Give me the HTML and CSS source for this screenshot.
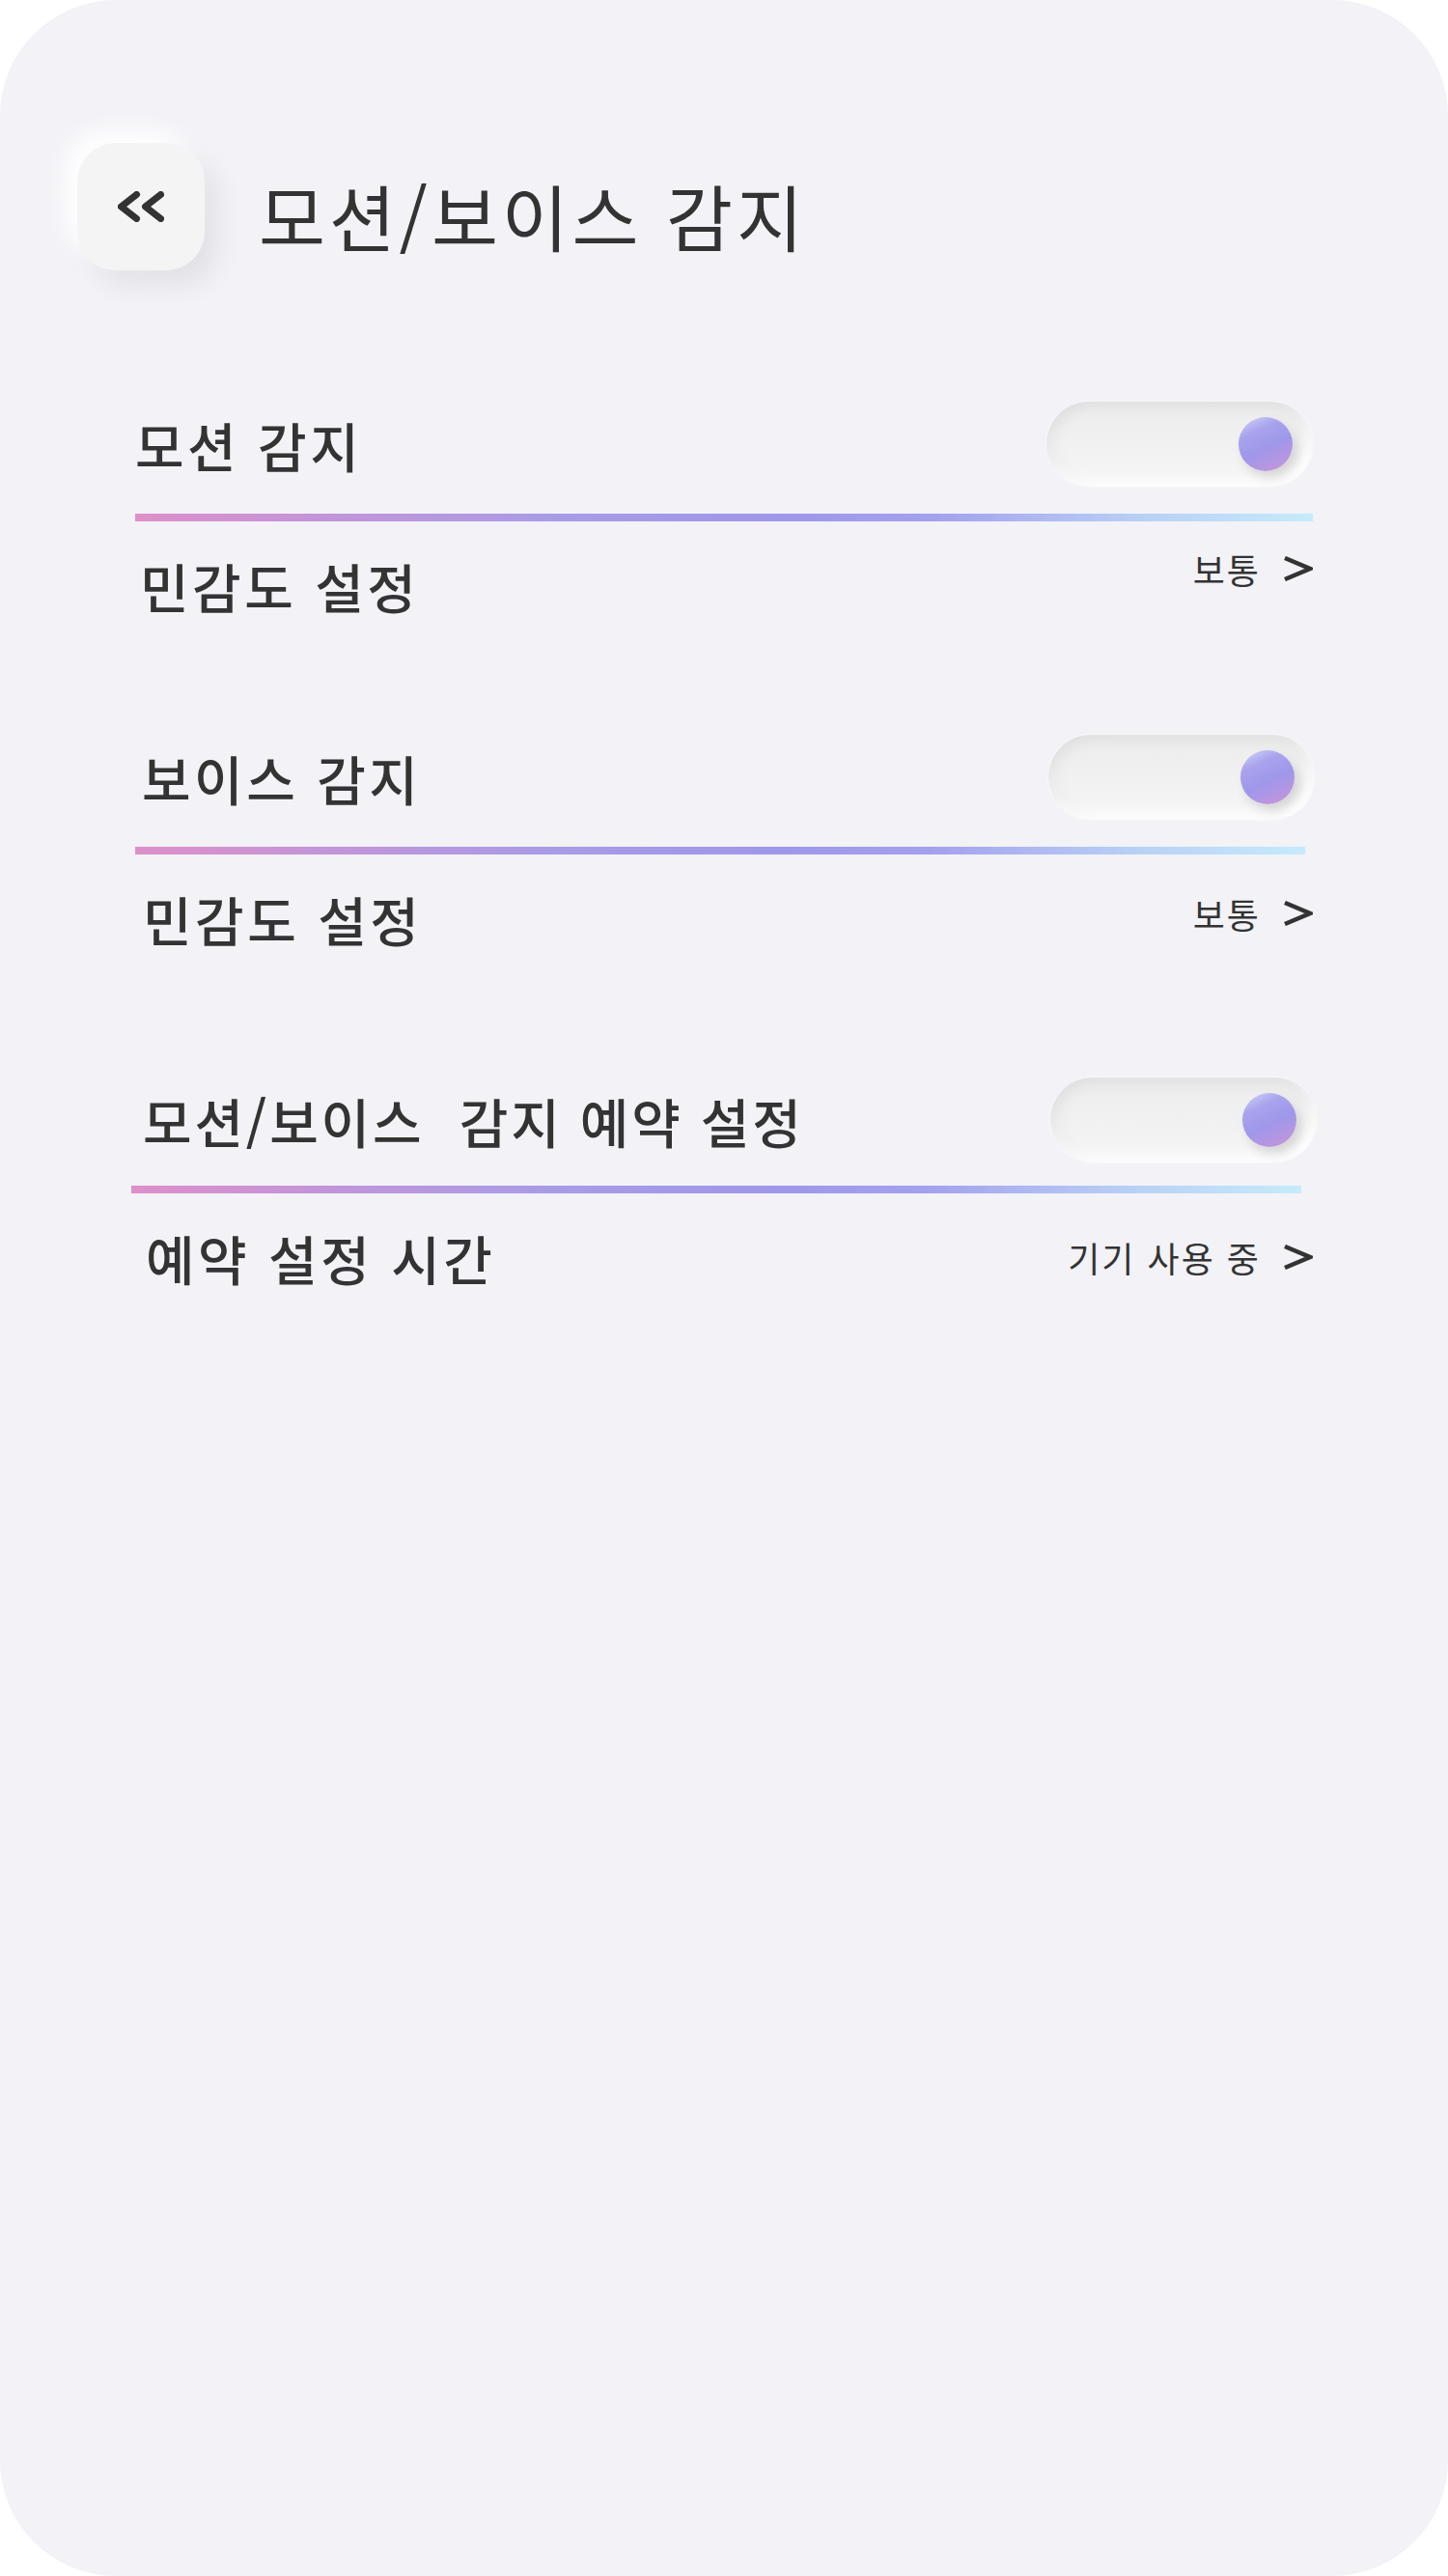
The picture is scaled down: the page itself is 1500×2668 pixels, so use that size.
FILE: index.html
```html
<!DOCTYPE html>
<html lang="ko">
<head>
<meta charset="utf-8">
<title>모션/보이스 감지</title>
<link rel="stylesheet" href="styles.css">
</head>
<body>
<div class="screen">
  <header class="header">
    <button class="back-btn" aria-label="뒤로">
      <svg width="48" height="32" viewBox="0 0 48 32" fill="none" stroke="#333333" stroke-width="7" stroke-linecap="round" stroke-linejoin="round">
        <path d="M19.5 3.5 L3.5 16 L19.5 28.5"/>
        <path d="M44.5 3.5 L28.5 16 L44.5 28.5"/>
      </svg>
    </button>
    <h1 class="title">모션/보이스 감지</h1>
  </header>

  <main class="list">
    <section class="section s1">
      <div class="row-toggle">
        <span class="label">모션 감지</span>
        <div class="toggle"><span class="knob"></span></div>
      </div>
      <div class="divider"></div>
      <div class="row-sub">
        <span class="label sub">민감도 설정</span>
        <span class="value raised">보통<svg class="chev" width="30" height="26" viewBox="0 0 30 26" fill="none" stroke="#333333" stroke-width="4.5" stroke-linejoin="miter"><path d="M1 2 L27 13 L1 24"/></svg></span>
      </div>
    </section>

    <section class="section s2">
      <div class="row-toggle">
        <span class="label">보이스 감지</span>
        <div class="toggle"><span class="knob"></span></div>
      </div>
      <div class="divider"></div>
      <div class="row-sub">
        <span class="label sub">민감도 설정</span>
        <span class="value lifted">보통<svg class="chev" width="30" height="26" viewBox="0 0 30 26" fill="none" stroke="#333333" stroke-width="4.5" stroke-linejoin="miter"><path d="M1 2 L27 13 L1 24"/></svg></span>
      </div>
    </section>

    <section class="section s3">
      <div class="row-toggle">
        <span class="label long">모션/보이스&nbsp; 감지 예약 설정</span>
        <div class="toggle"><span class="knob"></span></div>
      </div>
      <div class="divider"></div>
      <div class="row-sub">
        <span class="label sub">예약 설정 시간</span>
        <span class="value">기기 사용 중<svg class="chev" width="30" height="26" viewBox="0 0 30 26" fill="none" stroke="#333333" stroke-width="4.5" stroke-linejoin="miter"><path d="M1 2 L27 13 L1 24"/></svg></span>
      </div>
    </section>
  </main>
</div>
</body>
</html>
```

FILE: styles.css
```css
* {
  box-sizing: border-box;
}

html, body {
  margin: 0;
  padding: 0;
  background: #ffffff;
}

body {
  font-family: "Noto Sans CJK KR", "Noto Sans", sans-serif;
  color: #333333;
}

.screen {
  width: 1500px;
  height: 2668px;
  background: #f2f2f7;
  border-radius: 120px;
  overflow: hidden;
}

.header {
  display: flex;
  align-items: center;
  padding: 148px 0 0 80px;
}

.back-btn {
  width: 132px;
  height: 132px;
  border: none;
  padding: 0;
  margin: 0;
  border-radius: 40px;
  background: #f4f4f4;
  display: flex;
  align-items: center;
  justify-content: center;
  box-shadow: -14px -14px 26px rgba(255, 255, 255, 0.95), 14px 16px 28px rgba(0, 0, 0, 0.07);
}

.title {
  margin: 0 0 0 56px;
  font-size: 75px;
  font-weight: 400;
  letter-spacing: 3.8px;
  line-height: 1;
  color: #333333;
  padding-top: 16px;
}

.list {
  margin-top: 136px;
  padding: 0 140px;
  display: flex;
  flex-direction: column;
}

.section {
  display: flex;
  flex-direction: column;
}

.s2 {
  margin-top: 89px;
}

.s3 {
  margin-top: 99px;
}

.row-toggle {
  display: flex;
  align-items: center;
  justify-content: space-between;
  height: 88px;
}

.label {
  font-size: 55px;
  font-weight: 500;
  letter-spacing: 3.5px;
  line-height: 1;
  color: #333333;
  white-space: nowrap;
}

.label.long {
  letter-spacing: 2.8px;
}

.toggle {
  width: 276px;
  height: 88px;
  border-radius: 44px;
  background: linear-gradient(180deg, #ececec 0%, #f1f1f1 50%, #f6f6f6 100%);
  display: flex;
  align-items: center;
  justify-content: flex-end;
  padding-right: 21px;
  box-shadow:
    inset 0 9px 14px rgba(0, 0, 0, 0.035),
    inset 12px 0 16px rgba(0, 0, 0, 0.025),
    inset -6px -8px 12px rgba(255, 255, 255, 0.9),
    0 0 0 1px rgba(255, 255, 255, 0.4);
}

.knob {
  width: 56px;
  height: 56px;
  border-radius: 50%;
  background: linear-gradient(155deg, #cfd9f9 0%, #a9a3ee 28%, #9f97ea 55%, #b596e2 78%, #cf93d2 100%);
  box-shadow: 5px 7px 12px rgba(0, 0, 0, 0.13);
}

.divider {
  height: 8px;
  margin-top: 28px;
  background: linear-gradient(90deg, #de8fc9 0%, #c594d8 15%, #a99be6 35%, #9f97ea 55%, #a3a1ee 68%, #b8cff5 85%, #c6ebfb 100%);
}

.row-sub {
  display: flex;
  align-items: center;
  justify-content: space-between;
  height: 132px;
}

.value {
  display: flex;
  align-items: center;
  gap: 24px;
  font-size: 36px;
  font-weight: 400;
  letter-spacing: 2px;
  line-height: 1;
  color: #333333;
  white-space: nowrap;
}

.value.raised {
  margin-bottom: 34px;
}

.value.lifted {
  margin-bottom: 10px;
}

.chev {
  display: block;
  flex: none;
}

/* per-section fine alignment */
.s1 .label.sub {
  padding-left: 5px;
}

.s2 .label {
  padding-left: 7px;
}

.s2 .label.sub {
  padding-left: 8px;
}

.s2 .toggle {
  margin-right: -2px;
}

.s2 .divider {
  margin-right: 8px;
}

.s3 .label {
  padding-left: 8px;
}

.s3 .label.sub {
  padding-left: 11px;
}

.s3 .toggle {
  margin-right: -4px;
}

.s3 .divider {
  margin-top: 24px;
  margin-left: -4px;
  margin-right: 12px;
}
```
